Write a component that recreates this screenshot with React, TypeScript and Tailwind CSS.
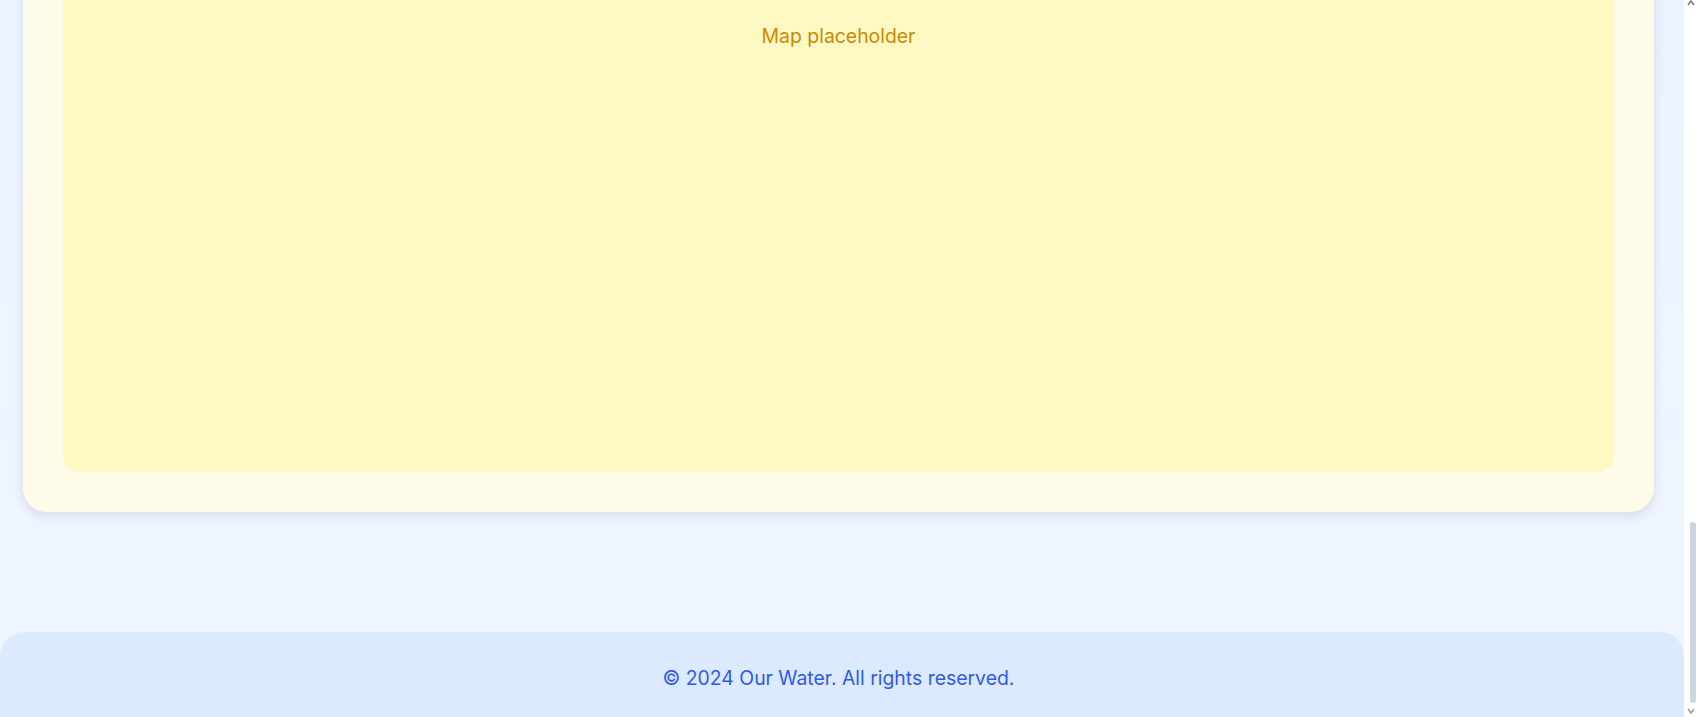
import React from "react";

export default function App() {
  return (
    <div
      className="flex h-[717px] w-full overflow-hidden"
      style={{ fontFamily: "Inter, 'Noto Sans', sans-serif" }}
    >
      <div className="flex min-w-0 flex-1 flex-col justify-end overflow-hidden bg-gradient-to-b from-[#eaf3ff] to-[#eff6ff]">
        <div className="pl-[23px] pr-[30px]">
          <div className="rounded-3xl bg-[#fefce8] p-10 shadow-[0_4px_10px_rgba(100,116,139,0.18)]">
            <div className="flex h-[520px] justify-center rounded-2xl bg-[#fef9c3] pt-[70px]">
              <span className="text-[19.4px] leading-7 text-[#ca8a04]">Map placeholder</span>
            </div>
          </div>
        </div>
        <div className="h-[120px] shrink-0" />
        <footer className="h-[85px] shrink-0 rounded-t-3xl bg-[#dbeafe] pl-[23px] pr-[30px] pt-8">
          <p className="text-center text-[19.4px] leading-7 text-[#2f5ae9]">
            © 2024 Our Water. All rights reserved.
          </p>
        </footer>
      </div>
      <div className="flex w-[12px] shrink-0 flex-col items-end bg-white">
        <svg width="8" height="6" viewBox="0 0 8 6" className="mr-[1px]">
          <path d="M1 5 L4 1 L7 5" stroke="#777" strokeWidth="1.5" fill="none" />
        </svg>
        <div className="h-[516px]" />
        <div className="h-[181px] w-[6px] rounded-full bg-[#cdd5de]" />
        <svg width="8" height="6" viewBox="0 0 8 6" className="mr-[1px] mt-[5px]">
          <path d="M1 1 L4 5 L7 1" stroke="#999" strokeWidth="1.5" fill="none" />
        </svg>
      </div>
    </div>
  );
}
